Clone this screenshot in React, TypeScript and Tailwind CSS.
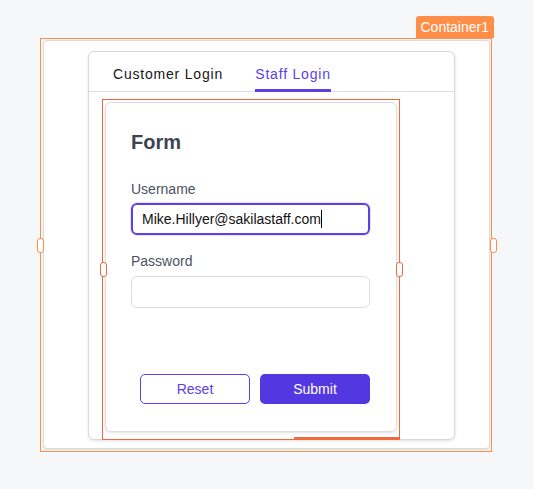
import React from "react";

const Handle = ({ className }: { className: string }) => (
  <div
    className={`absolute w-[7px] h-[15px] rounded-[3px] bg-white border ${className}`}
  />
);

const LoginForm = () => {
  return (
    <div className="relative mt-[7px] ml-[13px] w-[298px] h-[341px] border border-[#ef6a3c] p-[2px]">
      <div className="h-[330px] rounded-[6px] border border-[#dedede] bg-white shadow-[0_1px_3px_rgba(0,0,0,0.12)] pl-[25px] pr-[26px] pt-[25px]">
        <h2 className="text-[20px] font-bold leading-[28px] text-[#3e4452]">Form</h2>
        <label className="block mt-[25px] text-[14px] leading-[16px] text-[#4b5260]">Username</label>
        <div className="mt-[6px] h-[32px] rounded-[6px] border-2 border-[#5a41e6] flex items-center px-[9px] shadow-[0_0_0_1px_rgba(90,65,230,0.15)]">
          <span className="text-[14px] text-[#111]">Mike.Hillyer@sakilastaff.com</span>
          <span className="w-px h-[18px] bg-black" />
        </div>
        <label className="block mt-[18px] text-[14px] leading-[16px] text-[#4b5260]">Password</label>
        <div className="mt-[7px] h-[32px] rounded-[6px] border border-[#dcdcdc]" />
        <div className="mt-[66px] flex justify-end gap-[10px]">
          <button className="w-[110px] h-[30px] rounded-[5px] border border-[#5a41e6] text-[14px] text-[#5a41e6] bg-white">
            Reset
          </button>
          <button className="w-[110px] h-[30px] rounded-[5px] bg-[#5337e0] text-[14px] text-white">
            Submit
          </button>
        </div>
      </div>
      <Handle className="border-[#ef6a3c] left-[-3px] top-[162px]" />
      <Handle className="border-[#ef6a3c] right-[-4px] top-[162px]" />
      <div className="absolute right-[-1px] bottom-[-1px] w-[106px] h-[3px] bg-[#ef6a3c]" />
    </div>
  );
};

export default function App() {
  return (
    <div
      className="relative w-[533px] h-[489px] bg-[#f6f7f9] pt-[38px] pl-[40px]"
      style={{ fontFamily: '"Liberation Sans", Arial, sans-serif' }}
    >
      <div className="relative w-[452px] h-[414px] border border-[#ff8e48] pt-[1px] pl-[2px] pr-[1px]">
        <div className="absolute right-[-3px] top-[-23px] h-[22px] px-[5px] rounded-t-[3px] bg-[#ff8e48] text-[14px] leading-[22px] text-white">
          Container1
        </div>
        <div className="h-[409px] rounded-[4px] border border-[#dcdcdc] bg-white shadow-[0_1px_2px_rgba(0,0,0,0.1)] pl-[44px] pt-[10px]">
          <div className="w-[367px] h-[389px] rounded-[6px] border border-[#d9d9d9] bg-white shadow-[0_1px_3px_rgba(0,0,0,0.12)]">
            <div className="flex h-[40px] border-b border-[#dedede] pl-[24px] gap-[32px] text-[14px] tracking-[0.8px]">
              <div className="flex items-center pt-[6px] text-[#161616]">Customer Login</div>
              <div className="flex items-center text-[#5a41e6] border-b-[3px] border-[#5a41e6] pt-[8px] mb-[-1px] w-[76px] justify-center">
                Staff Login
              </div>
            </div>
            <LoginForm />
          </div>
        </div>
        <Handle className="border-[#ff8e48] left-[-4px] top-[199px]" />
        <Handle className="border-[#ff8e48] right-[-6px] top-[199px]" />
      </div>
    </div>
  );
}
